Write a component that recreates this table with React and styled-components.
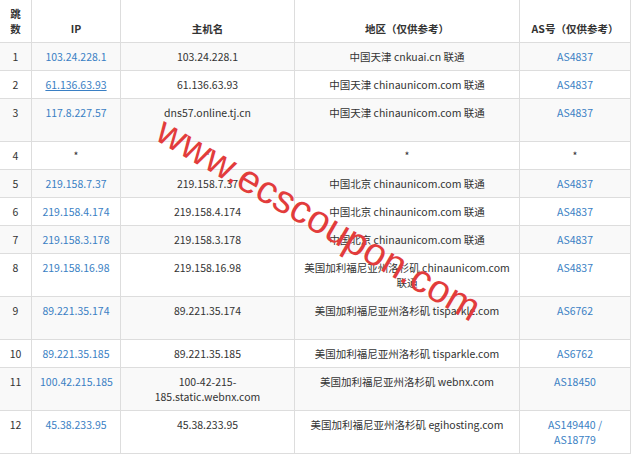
import React from "react";
import styled, {createGlobalStyle} from "styled-components";

const GlobalStyle = createGlobalStyle`
  html, body {
    margin: 0;
    padding: 0;
    background: #fff;
  }
  body {
    font-family: "Noto Sans CJK SC", "Liberation Sans", sans-serif;
    font-size: 10.5px;
    color: #333;
  }
`;

const Page = styled.div`
  position: relative;
  width: 632px;
  height: 455px;
  overflow: hidden;
`;

const Table = styled.table`
  border-collapse: collapse;
  table-layout: fixed;
  width: 631px;
  margin: -1px 0 0 -1px;
`;

const HeadCell = styled.th`
  border: 1px solid #ddd;
  padding: 6px 8px;
  line-height: 15px;
  font-weight: bold;
  text-align: center;
  vertical-align: bottom;
  color: #333;
`;

const Row = styled.tr`
  height: ${props => props.$tall ? "43px" : "28px"};
  background: ${props => props.$striped ? "#f9f9f9" : "#fff"};
`;

const Cell = styled.td`
  border: 1px solid #ddd;
  padding: 6px 8px;
  line-height: 15px;
  text-align: center;
  vertical-align: top;
  color: #333;
  word-break: normal;
`;

const Link = styled.a`
  color: #3a7fc4;
  text-decoration: ${props => props.$underline ? "underline" : "none"};
`;

const Watermark = styled.span`
  position: absolute;
  left: 319px;
  top: 219px;
  transform: translate(-50%, -50%) rotate(30deg);
  font-family: "Liberation Sans", Arial, sans-serif;
  font-size: 39px;
  line-height: 1;
  color: #e23c3c;
  white-space: nowrap;
  pointer-events: none;
`;

const rows = [
  {hop: "1", ip: "103.24.228.1", host: "103.24.228.1", area: "中国天津 cnkuai.cn 联通", as: "AS4837"},
  {hop: "2", ip: "61.136.63.93", underline: true, host: "61.136.63.93", area: "中国天津 chinaunicom.com 联通", as: "AS4837"},
  {hop: "3", ip: "117.8.227.57", host: "dns57.online.tj.cn", area: "中国天津 chinaunicom.com 联通", as: "AS4837", tall: true},
  {hop: "4", ip: null, host: "*", area: "*", as: null},
  {hop: "5", ip: "219.158.7.37", host: "219.158.7.37", area: "中国北京 chinaunicom.com 联通", as: "AS4837"},
  {hop: "6", ip: "219.158.4.174", host: "219.158.4.174", area: "中国北京 chinaunicom.com 联通", as: "AS4837"},
  {hop: "7", ip: "219.158.3.178", host: "219.158.3.178", area: "中国北京 chinaunicom.com 联通", as: "AS4837"},
  {hop: "8", ip: "219.158.16.98", host: "219.158.16.98", area: ["美国加利福尼亚州洛杉矶 chinaunicom.com", "联通"], as: "AS4837", tall: true},
  {hop: "9", ip: "89.221.35.174", host: "89.221.35.174", area: "美国加利福尼亚州洛杉矶 tisparkle.com", as: "AS6762", tall: true},
  {hop: "10", ip: "89.221.35.185", host: "89.221.35.185", area: "美国加利福尼亚州洛杉矶 tisparkle.com", as: "AS6762"},
  {hop: "11", ip: "100.42.215.185", host: ["100-42-215-", "185.static.webnx.com"], area: "美国加利福尼亚州洛杉矶 webnx.com", as: "AS18450", tall: true},
  {hop: "12", ip: "45.38.233.95", host: "45.38.233.95", area: "美国加利福尼亚州洛杉矶 egihosting.com", as: ["AS149440 /", "AS18779"], tall: true},
];

// keeps the line breaks of the screenshot instead of relying on font widths
const lines = (value) => {
  if (!Array.isArray(value)) return value;
  return value.map((line, i) => (
    <React.Fragment key={i}>
      {i > 0 && <br/>}
      {line}
    </React.Fragment>
  ));
};

const App = () => {
  return (
    <Page>
      <GlobalStyle/>
      <Table>
        <colgroup>
          <col style={{width: 32}}/>
          <col style={{width: 89}}/>
          <col style={{width: 174}}/>
          <col style={{width: 225}}/>
          <col style={{width: 111}}/>
        </colgroup>
        <thead>
          <tr>
            <HeadCell>跳数</HeadCell>
            <HeadCell>IP</HeadCell>
            <HeadCell>主机名</HeadCell>
            <HeadCell>地区（仅供参考）</HeadCell>
            <HeadCell>AS号（仅供参考）</HeadCell>
          </tr>
        </thead>
        <tbody>
          {rows.map((row, index) => (
            <Row key={row.hop} $tall={row.tall} $striped={index % 2 === 0}>
              <Cell>{row.hop}</Cell>
              <Cell>
                {row.ip ? <Link href="#" $underline={row.underline}>{row.ip}</Link> : "*"}
              </Cell>
              <Cell>{lines(row.host)}</Cell>
              <Cell>{lines(row.area)}</Cell>
              <Cell>
                {row.as ? <Link href="#">{lines(row.as)}</Link> : "*"}
              </Cell>
            </Row>
          ))}
        </tbody>
      </Table>
      <Watermark>www.ecscoupon.com</Watermark>
    </Page>
  );
};

export default App;
